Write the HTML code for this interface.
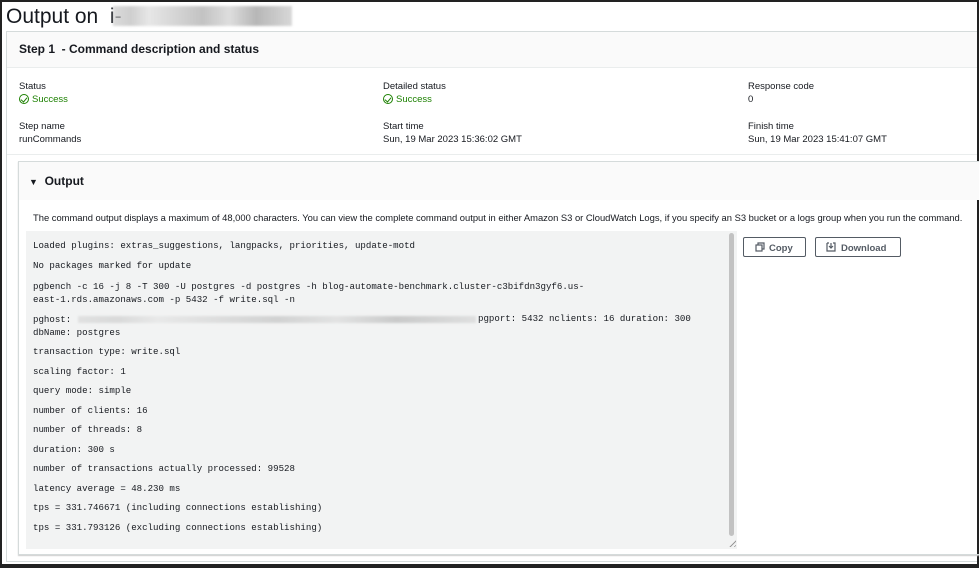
<!DOCTYPE html>
<html><head><style>
*{margin:0;padding:0;box-sizing:border-box}
body{width:979px;height:568px;position:relative;overflow:hidden;background:#fff;font-family:"Liberation Sans",sans-serif;color:#16191f}
.a{position:absolute;white-space:nowrap}
.s{font-size:9.5px}
.g{color:#1d8102}
.mono{font-family:"Liberation Mono",monospace;font-size:9.1px;letter-spacing:0;color:#16191f}
.ic{display:inline-block;width:10px;height:10px;border:1.3px solid #1d8102;border-radius:50%;vertical-align:-2px;margin-right:3px;position:relative}
.ic:after{content:"";position:absolute;left:2px;top:1px;width:3px;height:5px;border-right:1.3px solid #1d8102;border-bottom:1.3px solid #1d8102;transform:rotate(40deg)}
.blur{background:linear-gradient(90deg,#ccc,#bbb 10%,#ddd 20%,#c4c4c4 35%,#aaa 50%,#d0d0d0 65%,#999 80%,#c8c8c8);filter:blur(1px)}
</style></head><body>
<div class="a" style="left:0;top:0;width:979px;height:568px;border:2px solid #222;border-bottom-width:4px"></div>
<div class="a" style="left:6px;top:5px;font-size:21px;color:#16191f">Output on&nbsp; i-</div>
<div class="a blur" style="left:113px;top:6px;width:179px;height:20px;opacity:.7"></div>
<div class="a" style="left:6px;top:31px;width:971px;height:531px;border:1px solid #d5dbdb;border-right:none"></div>
<div class="a" style="left:7px;top:32px;width:970px;height:36px;background:#fafafa;border-bottom:1px solid #eaeded"></div>
<div class="a" style="left:19px;top:42px;font-size:12px;font-weight:bold">Step 1&nbsp; - Command description and status</div>
<div class="a s" style="left:19px;top:81px">Status</div>
<div class="a s g" style="left:19px;top:94px"><span class="ic"></span>Success</div>
<div class="a s" style="left:19px;top:121px">Step name</div>
<div class="a s" style="left:19px;top:134px">runCommands</div>
<div class="a s" style="left:383px;top:81px">Detailed status</div>
<div class="a s g" style="left:383px;top:94px"><span class="ic"></span>Success</div>
<div class="a s" style="left:383px;top:121px">Start time</div>
<div class="a s" style="left:383px;top:134px">Sun, 19 Mar 2023 15:36:02 GMT</div>
<div class="a s" style="left:748px;top:81px">Response code</div>
<div class="a s" style="left:748px;top:94px">0</div>
<div class="a s" style="left:748px;top:121px">Finish time</div>
<div class="a s" style="left:748px;top:134px">Sun, 19 Mar 2023 15:41:07 GMT</div>
<div class="a" style="left:7px;top:154px;width:970px;border-top:1px solid #eaeded"></div>
<div class="a" style="left:18px;top:161px;width:961px;height:394px;border:1px solid #d5dbdb;border-right:none;box-shadow:0 1px 1px #ccc"></div>
<div class="a" style="left:19px;top:162px;width:960px;height:38px;background:#fafafa"></div>
<div class="a" style="left:29px;top:174px;font-size:12px;font-weight:bold"><span style="font-size:9px">▼</span>&nbsp; Output</div>
<div class="a" style="left:33px;top:212px;font-size:9.4px">The command output displays a maximum of 48,000 characters. You can view the complete command output in either Amazon S3 or CloudWatch Logs, if you specify an S3 bucket or a logs group when you run the command.</div>
<div class="a" style="left:26px;top:231px;width:711px;height:318px;background:#f2f3f3"></div>
<div class="a" style="left:729px;top:233px;width:5px;height:303px;background:#c2c2c2;border-radius:3px"></div>
<div class="a" style="left:727px;top:538px;width:9px;height:9px;background:repeating-linear-gradient(135deg,transparent 0 2px,#999 2px 3px);clip-path:polygon(100% 0,100% 100%,0 100%)"></div>
<div class="a mono" style="left:33px;top:240px">Loaded plugins: extras_suggestions, langpacks, priorities, update-motd</div>
<div class="a mono" style="left:33px;top:260px">No packages marked for update</div>
<div class="a mono" style="left:33px;top:280px;line-height:13px">pgbench -c 16 -j 8 -T 300 -U postgres -d postgres -h blog-automate-benchmark.cluster-c3bifdn3gyf6.us-<br>east-1.rds.amazonaws.com -p 5432 -f write.sql -n</div>
<div class="a mono" style="left:33px;top:313px;line-height:13px">pghost:<br>dbName: postgres</div>
<div class="a blur" style="left:78px;top:316px;width:398px;height:7px;opacity:.45"></div>
<div class="a mono" style="left:478px;top:313px">pgport: 5432 nclients: 16 duration: 300</div>
<div class="a mono" style="left:33px;top:346px">transaction type: write.sql</div>
<div class="a mono" style="left:33px;top:366px">scaling factor: 1</div>
<div class="a mono" style="left:33px;top:385px">query mode: simple</div>
<div class="a mono" style="left:33px;top:405px">number of clients: 16</div>
<div class="a mono" style="left:33px;top:424px">number of threads: 8</div>
<div class="a mono" style="left:33px;top:444px">duration: 300 s</div>
<div class="a mono" style="left:33px;top:463px">number of transactions actually processed: 99528</div>
<div class="a mono" style="left:33px;top:483px">latency average = 48.230 ms</div>
<div class="a mono" style="left:33px;top:502px">tps = 331.746671 (including connections establishing)</div>
<div class="a mono" style="left:33px;top:522px">tps = 331.793126 (excluding connections establishing)</div>
<div class="a" style="left:743px;top:237px;width:63px;height:20px;border:1px solid #545b64;border-radius:2px;font-size:9.5px;font-weight:bold;color:#545b64;padding:4px 0 0 11px">
<svg width="10" height="10" style="vertical-align:-1px;margin-right:4px" viewBox="0 0 10 10" fill="none" stroke="#545b64" stroke-width="1.2"><rect x="1" y="3" width="6" height="6"/><path d="M3 3V1h6v6H7"/></svg>Copy</div>
<div class="a" style="left:815px;top:237px;width:86px;height:20px;border:1px solid #545b64;border-radius:2px;font-size:9.5px;font-weight:bold;color:#545b64;padding:4px 0 0 10px">
<svg width="10" height="10" style="vertical-align:-1px;margin-right:5px" viewBox="0 0 10 10" fill="none" stroke="#545b64" stroke-width="1.2"><path d="M1 1h2M7 1h2v8H1V1M5 1v5M3 4l2 2 2-2"/></svg>Download</div>
</body></html>
